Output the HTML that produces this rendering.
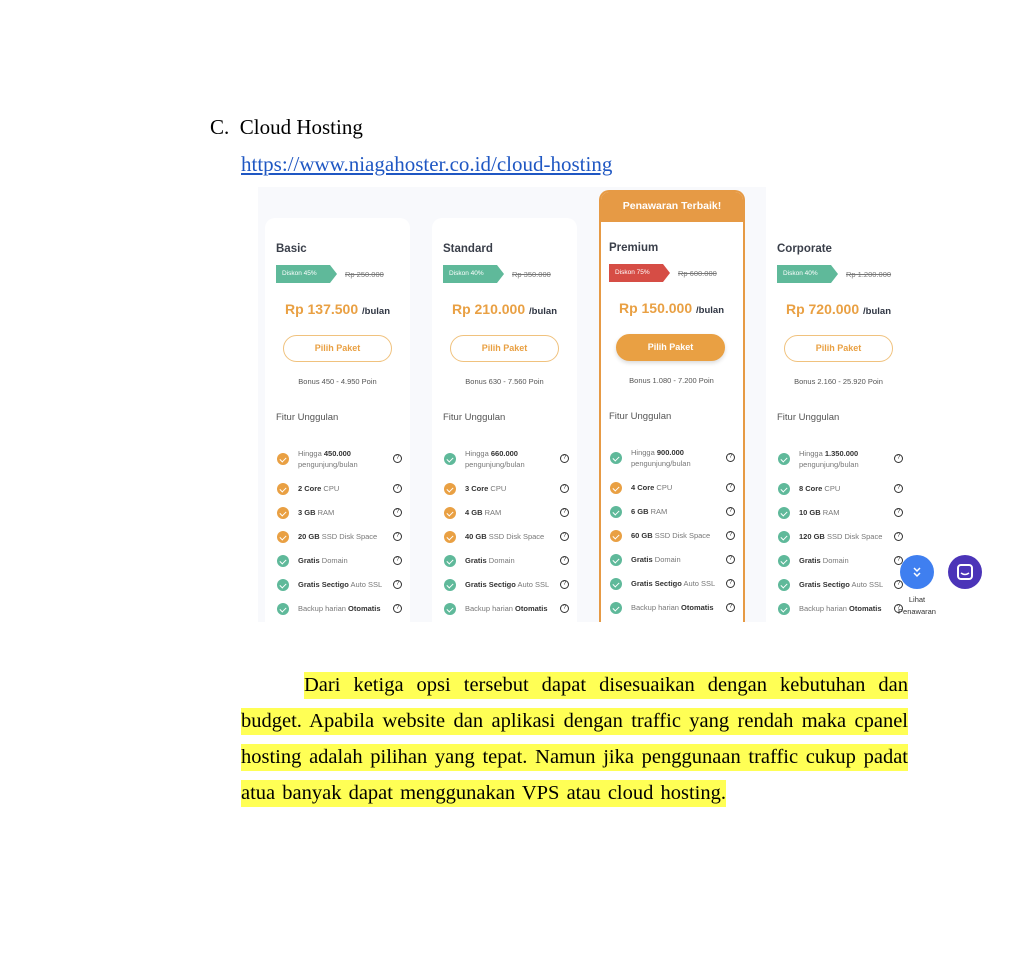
<!DOCTYPE html>
<html><head><meta charset="utf-8"><style>
*{margin:0;padding:0;box-sizing:border-box}
body{width:1032px;height:960px;background:#fff;position:relative;overflow:hidden;font-family:"Liberation Serif",serif;color:#000}
.t{position:absolute;font-size:21px;white-space:nowrap}
.ln{position:absolute;height:27px;line-height:27px;font-size:20.5px;background:#ffff55;text-align:justify;text-align-last:justify;white-space:nowrap}
.shot{position:absolute;left:258px;top:187px;width:508px;height:435px;background:#f8f9fc;overflow:visible}
.card{position:absolute;top:218px;width:145px;height:404px;background:#fff;border-radius:10px 10px 0 0;font-family:"Liberation Sans",sans-serif;color:#2f3542;overflow:hidden}
.card>*{position:absolute}
.ttl{left:11px;top:25px;font-size:11.5px;font-weight:bold;color:#3a3f4a}
.bdg{left:11px;top:47px;height:18px;width:54px;font-size:6.5px;color:#fff;line-height:18px;padding-left:6px}
.bdg:after{content:"";position:absolute;right:-7px;top:0;border-left:7px solid;border-left-color:inherit;border-top:9px solid transparent;border-bottom:9px solid transparent}
.g{background:#5fb99a;border-left-color:#5fb99a}
.r{background:#d64d45;border-left-color:#d64d45}
.old{left:80px;top:52px;font-size:7.5px;color:#777;text-decoration:line-through}
.pr{left:0;width:145px;text-align:center;top:83px;font-size:14px;color:#e9a043;font-weight:bold}
.pr small{font-size:9.5px;color:#2f3542}
.btn{left:18px;top:117px;width:109px;height:27px;border:1px solid #f0c27e;border-radius:14px;text-align:center;line-height:25px;font-size:9px;color:#e9a043;font-weight:bold}
.bon{left:0;width:145px;text-align:center;top:159px;font-size:7.5px;color:#555}
.fit{left:11px;top:194px;font-size:9.5px;color:#555}
.f{left:12px;width:125px;height:14px;font-size:7.5px;color:#777;line-height:11px}
.f b{color:#333}
.f i{position:absolute;left:0;top:1px;width:12px;height:12px;border-radius:50%;background:#5fb99a}
.f i.o{background:#e9a043}
.f i:after{content:"";position:absolute;left:4px;top:3px;width:3px;height:5px;border:solid #fff;border-width:0 1px 1px 0;transform:rotate(45deg)}
.f span{position:absolute;left:21px;top:1px;white-space:nowrap}
.f em{position:absolute;right:0;top:2px;width:9px;height:9px;border:1px solid #333;border-radius:50%;font-style:normal;font-size:6px;line-height:7px;text-align:center;color:#333}
</style></head><body>
<div class="t" style="left:210px;top:115px">C.&nbsp;&nbsp;Cloud Hosting</div>
<div class="t" style="left:241px;top:152px;color:#1f57c3;text-decoration:underline">https://www.niagahoster.co.id/cloud-hosting</div>

<div class="shot"></div>

<!-- Basic -->
<div class="card" style="left:265px">
<div class="ttl">Basic</div><div class="bdg g">Diskon 45%</div><div class="old">Rp 250.000</div>
<div class="pr">Rp 137.500 <small>/bulan</small></div><div class="btn">Pilih Paket</div>
<div class="bon">Bonus 450 - 4.950 Poin</div><div class="fit">Fitur Unggulan</div>
<div class="f" style="top:229px;height:24px"><i class="o" style="top:6px"></i><span>Hingga <b>450.000</b><br>pengunjung/bulan</span><em style="top:7px">?</em></div>
<div class="f" style="top:264px"><i class="o"></i><span><b>2 Core</b> CPU</span><em>?</em></div>
<div class="f" style="top:288px"><i class="o"></i><span><b>3 GB</b> RAM</span><em>?</em></div>
<div class="f" style="top:312px"><i class="o"></i><span><b>20 GB</b> SSD Disk Space</span><em>?</em></div>
<div class="f" style="top:336px"><i></i><span><b>Gratis</b> Domain</span><em>?</em></div>
<div class="f" style="top:360px"><i></i><span><b>Gratis Sectigo</b> Auto SSL</span><em>?</em></div>
<div class="f" style="top:384px"><i></i><span>Backup harian <b>Otomatis</b></span><em>?</em></div>
</div>

<!-- Standard -->
<div class="card" style="left:432px">
<div class="ttl">Standard</div><div class="bdg g">Diskon 40%</div><div class="old">Rp 350.000</div>
<div class="pr">Rp 210.000 <small>/bulan</small></div><div class="btn">Pilih Paket</div>
<div class="bon">Bonus 630 - 7.560 Poin</div><div class="fit">Fitur Unggulan</div>
<div class="f" style="top:229px;height:24px"><i style="top:6px"></i><span>Hingga <b>660.000</b><br>pengunjung/bulan</span><em style="top:7px">?</em></div>
<div class="f" style="top:264px"><i class="o"></i><span><b>3 Core</b> CPU</span><em>?</em></div>
<div class="f" style="top:288px"><i class="o"></i><span><b>4 GB</b> RAM</span><em>?</em></div>
<div class="f" style="top:312px"><i class="o"></i><span><b>40 GB</b> SSD Disk Space</span><em>?</em></div>
<div class="f" style="top:336px"><i></i><span><b>Gratis</b> Domain</span><em>?</em></div>
<div class="f" style="top:360px"><i></i><span><b>Gratis Sectigo</b> Auto SSL</span><em>?</em></div>
<div class="f" style="top:384px"><i></i><span>Backup harian <b>Otomatis</b></span><em>?</em></div>
</div>

<!-- Premium -->
<div class="card" style="left:599px;top:190px;height:432px;border:2px solid #e69a45;border-bottom:none;width:146px">
<div style="left:-2px;top:-2px;width:146px;height:32px;background:#e69a45;color:#fff;font-size:10.5px;font-weight:bold;text-align:center;line-height:32px">Penawaran Terbaik!</div>
<div class="ttl" style="left:8px;top:50px">Premium</div><div class="bdg r" style="left:8px;top:72px">Diskon 75%</div><div class="old" style="left:77px;top:77px">Rp 600.000</div>
<div class="pr" style="left:-2px;top:108px">Rp 150.000 <small>/bulan</small></div>
<div class="btn" style="left:15px;top:142px;background:#e9a043;border-color:#e9a043;color:#fff;box-shadow:0 2px 4px rgba(0,0,0,.15)">Pilih Paket</div>
<div class="bon" style="left:-2px;top:184px">Bonus 1.080 - 7.200 Poin</div><div class="fit" style="left:8px;top:219px">Fitur Unggulan</div>
<div class="f" style="left:9px;top:254px;height:24px"><i style="top:6px"></i><span>Hingga <b>900.000</b><br>pengunjung/bulan</span><em style="top:7px">?</em></div>
<div class="f" style="left:9px;top:289px"><i class="o"></i><span><b>4 Core</b> CPU</span><em>?</em></div>
<div class="f" style="left:9px;top:313px"><i></i><span><b>6 GB</b> RAM</span><em>?</em></div>
<div class="f" style="left:9px;top:337px"><i class="o"></i><span><b>60 GB</b> SSD Disk Space</span><em>?</em></div>
<div class="f" style="left:9px;top:361px"><i></i><span><b>Gratis</b> Domain</span><em>?</em></div>
<div class="f" style="left:9px;top:385px"><i></i><span><b>Gratis Sectigo</b> Auto SSL</span><em>?</em></div>
<div class="f" style="left:9px;top:409px"><i></i><span>Backup harian <b>Otomatis</b></span><em>?</em></div>
</div>

<!-- Corporate -->
<div class="card" style="left:766px">
<div class="ttl">Corporate</div><div class="bdg g">Diskon 40%</div><div class="old">Rp 1.200.000</div>
<div class="pr">Rp 720.000 <small>/bulan</small></div><div class="btn">Pilih Paket</div>
<div class="bon">Bonus 2.160 - 25.920 Poin</div><div class="fit">Fitur Unggulan</div>
<div class="f" style="top:229px;height:24px"><i style="top:6px"></i><span>Hingga <b>1.350.000</b><br>pengunjung/bulan</span><em style="top:7px">?</em></div>
<div class="f" style="top:264px"><i></i><span><b>8 Core</b> CPU</span><em>?</em></div>
<div class="f" style="top:288px"><i></i><span><b>10 GB</b> RAM</span><em>?</em></div>
<div class="f" style="top:312px"><i></i><span><b>120 GB</b> SSD Disk Space</span><em>?</em></div>
<div class="f" style="top:336px"><i></i><span><b>Gratis</b> Domain</span><em>?</em></div>
<div class="f" style="top:360px"><i></i><span><b>Gratis Sectigo</b> Auto SSL</span><em>?</em></div>
<div class="f" style="top:384px"><i></i><span>Backup harian <b>Otomatis</b></span><em>?</em></div>
</div>

<!-- floating buttons -->
<div style="position:absolute;left:900px;top:555px;width:34px;height:34px;border-radius:50%;background:#3f7ff0">
<svg width="34" height="34" viewBox="0 0 34 34"><path d="M14 13l3 3 3-3M14 18l3 3 3-3" fill="none" stroke="#fff" stroke-width="1.5"/></svg></div>
<div style="position:absolute;left:896px;top:594px;width:42px;text-align:center;font-family:'Liberation Sans',sans-serif;font-size:7.5px;color:#333;line-height:12px">Lihat<br>Penawaran</div>
<div style="position:absolute;left:948px;top:555px;width:34px;height:34px;border-radius:50%;background:#4b34b8">
<svg width="34" height="34" viewBox="0 0 34 34"><rect x="10" y="10" width="14" height="14" rx="3" fill="none" stroke="#fff" stroke-width="2"/><path d="M13 18q4 3 8 0" fill="none" stroke="#fff" stroke-width="1.5"/></svg></div>

<div class="ln" style="left:304px;top:672px;width:604px">Dari ketiga opsi tersebut dapat disesuaikan dengan kebutuhan dan</div>
<div class="ln" style="left:241px;top:708px;width:667px">budget. Apabila website dan aplikasi dengan traffic yang rendah maka cpanel</div>
<div class="ln" style="left:241px;top:744px;width:667px">hosting adalah pilihan yang tepat. Namun jika penggunaan traffic cukup padat</div>
<div class="ln" style="left:241px;top:780px;width:485px">atua banyak dapat menggunakan VPS atau cloud hosting.</div>
</body></html>
